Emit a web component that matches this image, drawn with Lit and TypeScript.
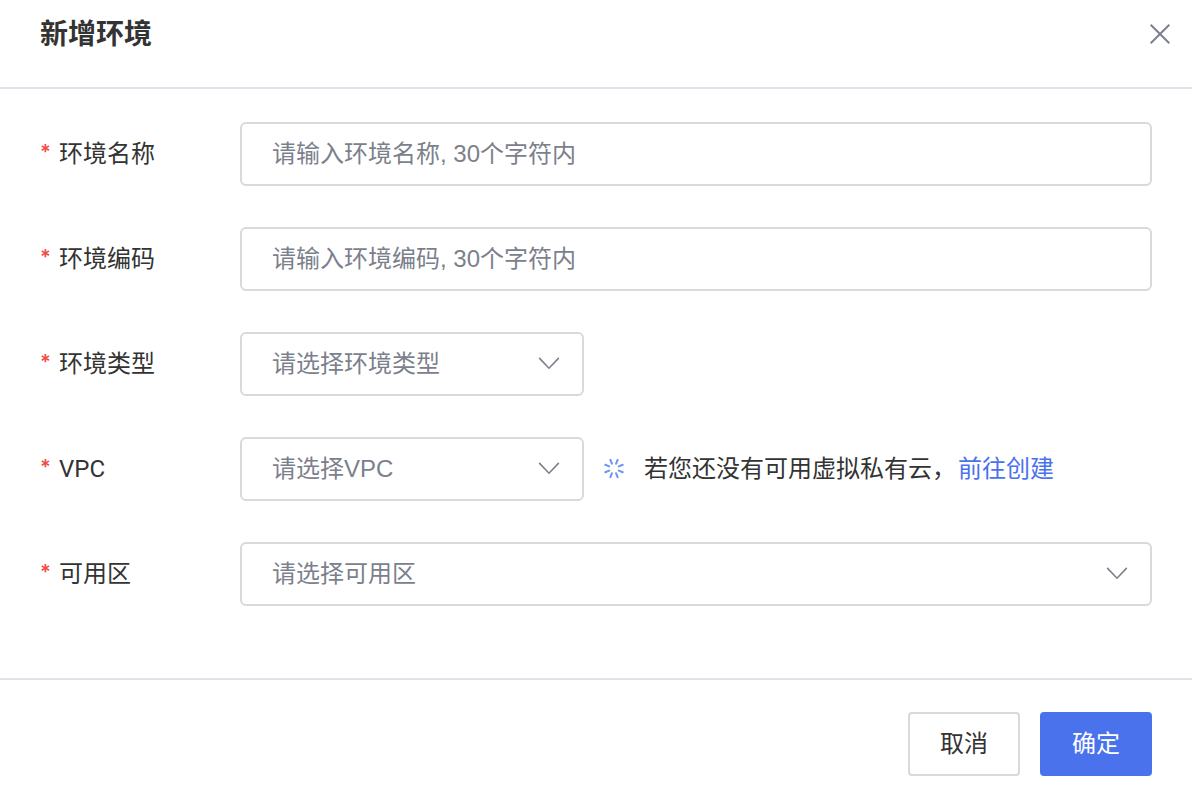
import { LitElement, html, css, nothing } from "lit";
import { customElement, property } from "lit/decorators.js";

@customElement("form-row")
class FormRow extends LitElement {
  static styles = css`
    :host { display: block; }
    .row { display: flex; align-items: center; }
  `;
  render() {
    return html`<div class="row"><slot></slot></div>`;
  }
}

interface Field {
  id: string;
  label: string;
  placeholder: string;
  kind: "text" | "select";
  wide?: boolean;
  hint?: boolean;
}

const FIELDS: Field[] = [
  { id: "env-name", label: "环境名称", placeholder: "请输入环境名称, 30个字符内", kind: "text" },
  { id: "env-code", label: "环境编码", placeholder: "请输入环境编码, 30个字符内", kind: "text" },
  { id: "env-type", label: "环境类型", placeholder: "请选择环境类型", kind: "select" },
  { id: "vpc", label: "VPC", placeholder: "请选择VPC", kind: "select", hint: true },
  { id: "zone", label: "可用区", placeholder: "请选择可用区", kind: "select", wide: true },
];

@customElement("app-root")
class AppRoot extends LitElement {
  @property({ attribute: false }) fields: Field[] = FIELDS;

  static styles = css`
    :host {
      display: block;
      background: #fff;
      color: #333;
      font: 24px/36px "Liberation Sans", "Noto Sans CJK SC", sans-serif;
    }
    * { box-sizing: border-box; }
    .dialog { display: flex; flex-direction: column; min-height: 100vh; }
    .header {
      display: flex;
      align-items: center;
      justify-content: space-between;
      padding: 14px 20px 31px 40px;
      border-bottom: 2px solid #dfe3e9;
    }
    .title { margin: 0; font-size: 28px; line-height: 42px; font-weight: 700; }
    .close {
      display: flex;
      padding: 0;
      border: 0;
      background: none;
      color: #7c7f8e;
      cursor: pointer;
    }
    .icon { display: block; fill: none; stroke: currentColor; stroke-width: 2; }
    .form {
      flex: 1;
      display: flex;
      flex-direction: column;
      gap: 41px;
      padding: 33px 40px 40px;
    }
    .label {
      flex: none;
      display: flex;
      gap: 9px;
      width: 200px;
      font-family: Roboto, "Noto Sans CJK SC", sans-serif;
    }
    .star {
      width: 10px;
      color: #f04b46;
      font-family: Inter, sans-serif;
      font-size: 20px;
      line-height: 32px;
      font-weight: 600;
      text-align: center;
    }
    .control {
      width: 100%;
      height: 64px;
      margin: 0;
      padding: 0 30px;
      border: 2px solid #d9d9d9;
      border-radius: 6px;
      background: #fff;
      color: #7c7f8c;
      font: inherit;
      outline: none;
      appearance: none;
    }
    .control::placeholder { color: #7c7f8c; opacity: 1; }
    .control:focus { border-color: #4a72ed; }
    .picker { display: grid; align-items: center; flex: 0 1 344px; }
    .picker.wide { flex: 1; }
    .picker > * { grid-area: 1 / 1; }
    .chevron { justify-self: end; margin-right: 23px; color: #7c7f8c; stroke-width: 1.6; pointer-events: none; }
    .hint { display: flex; align-items: center; margin-left: 20px; gap: 20px; }
    .spinner { color: #6f93f5; }
    .link { margin-left: 2px; color: #4a72ed; text-decoration: none; }
    .footer {
      display: flex;
      justify-content: flex-end;
      gap: 20px;
      padding: 32px 40px 16px;
      border-top: 2px solid #dfe3e9;
    }
    .button {
      height: 64px;
      padding: 0 30px;
      border: 2px solid #d9d9d9;
      border-radius: 4px;
      background: #fff;
      color: #333;
      font: inherit;
      cursor: pointer;
    }
    .button.primary { border-color: #4a72ed; background: #4a72ed; color: #fff; }
  `;

  private control(f: Field) {
    if (f.kind === "text") {
      return html`<input class="control" id=${f.id} type="text" placeholder=${f.placeholder} required />`;
    }
    return html`
      <div class="picker ${f.wide ? "wide" : ""}">
        <select class="control" id=${f.id} required>
          <option value="" selected>${f.placeholder}</option>
        </select>
        <svg class="icon chevron" width="24" height="24" viewBox="0 0 24 24" aria-hidden="true">
          <path stroke-linecap="round" d="M2.6 6.4L12 16.2L21.4 6.4" />
        </svg>
      </div>
    `;
  }

  private hint() {
    return html`
      <div class="hint">
        <svg class="icon spinner" width="20" height="20" viewBox="0 0 20 20" aria-hidden="true">
          <path
            stroke-linecap="round"
            d="M12.1 4.7L13.6 .8M14.8 7.4L18.7 5.8M14.8 11.6L18.7 13.2M12.1 14.3L13.6 18.2M7.9 14.3L6.4 18.2M5.2 11.6L1.3 13.2M5.2 7.4L1.3 5.8M7.9 4.7L6.4 .8"
          />
        </svg>
        <span>若您还没有可用虚拟私有云，<a class="link" href="#">前往创建</a></span>
      </div>
    `;
  }

  render() {
    return html`
      <div class="dialog" role="dialog" aria-labelledby="title">
        <header class="header">
          <h1 class="title" id="title">新增环境</h1>
          <button class="close" type="button" aria-label="关闭">
            <svg class="icon" width="24" height="24" viewBox="0 0 24 24" aria-hidden="true">
              <path d="M2.7 1.7L21.3 20.3M21.3 1.7L2.7 20.3" />
            </svg>
          </button>
        </header>
        <form class="form" id="env-form">
          ${this.fields.map(
            (f) => html`
              <form-row>
                <label class="label" for=${f.id}><span class="star">*</span>${f.label}</label>
                ${this.control(f)} ${f.hint ? this.hint() : nothing}
              </form-row>
            `
          )}
        </form>
        <footer class="footer">
          <button class="button" type="button">取消</button>
          <button class="button primary" type="button">确定</button>
        </footer>
      </div>
    `;
  }
}
